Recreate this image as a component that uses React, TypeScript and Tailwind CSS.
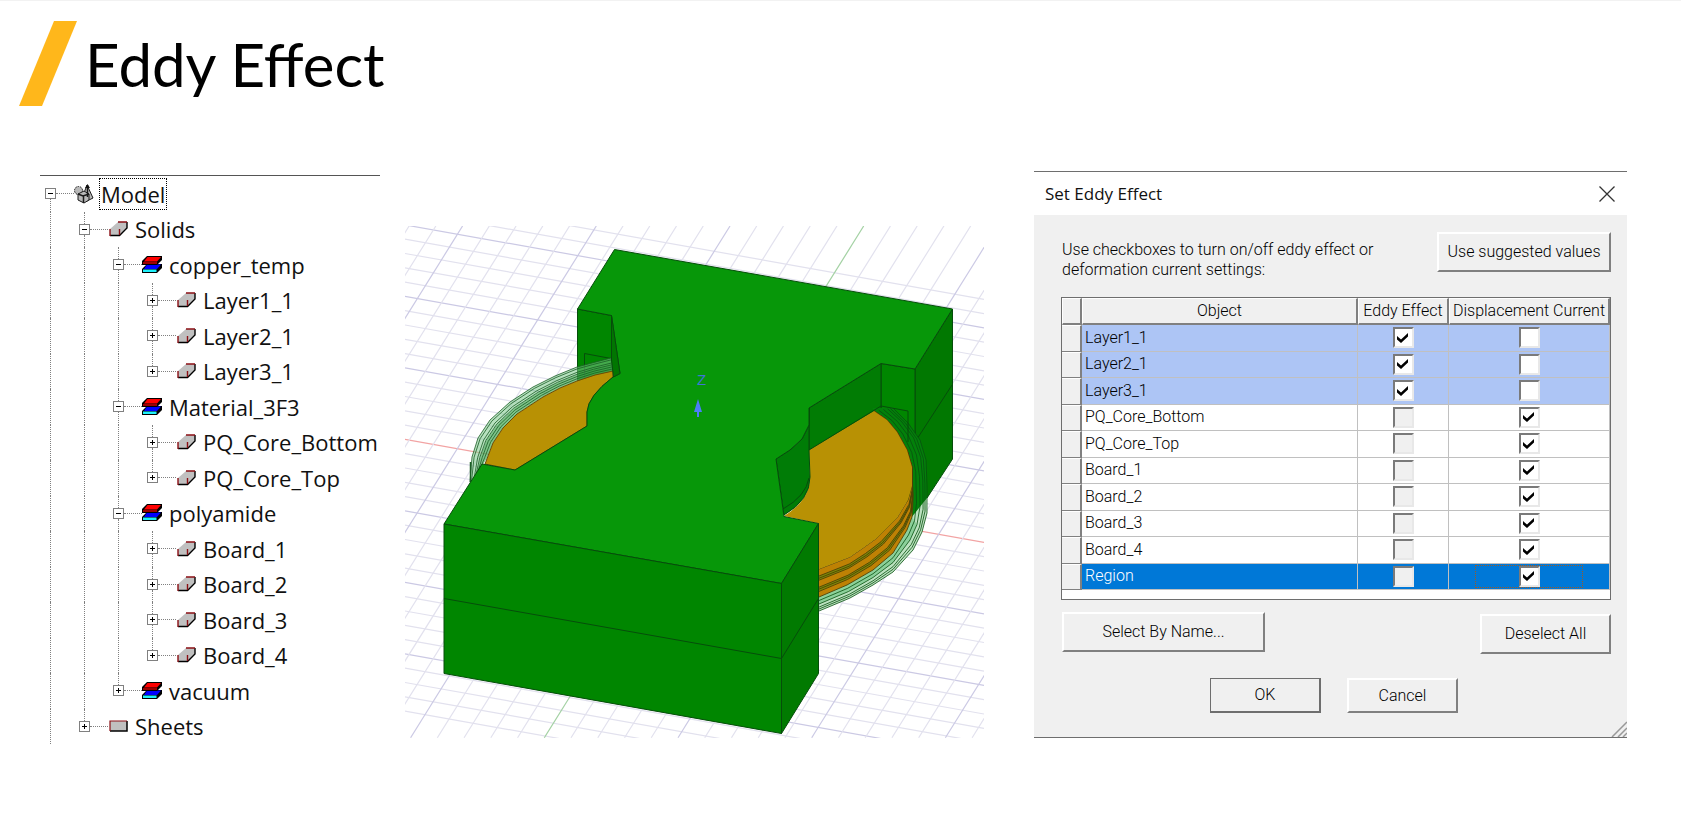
import { useState } from 'react';

type NodeIcon = 'model' | 'solid' | 'material' | 'sheet';

interface TreeRow {
  label: string;
  icon: NodeIcon;
  open?: boolean;
  // one flag for each ancestor column: does its guide line run on past this row
  guides: boolean[];
  top?: boolean;
  bottom?: boolean;
}

const treeRows: TreeRow[] = [
  { label: 'Model', icon: 'model', open: true, guides: [], bottom: true },
  { label: 'Solids', icon: 'solid', open: true, guides: [true], top: true, bottom: true },
  { label: 'copper_temp', icon: 'material', open: true, guides: [true, true], top: true, bottom: true },
  { label: 'Layer1_1', icon: 'solid', guides: [true, true, true], top: true, bottom: true },
  { label: 'Layer2_1', icon: 'solid', guides: [true, true, true], top: true, bottom: true },
  { label: 'Layer3_1', icon: 'solid', guides: [true, true, true], top: true },
  { label: 'Material_3F3', icon: 'material', open: true, guides: [true, true], top: true, bottom: true },
  { label: 'PQ_Core_Bottom', icon: 'solid', guides: [true, true, true], top: true, bottom: true },
  { label: 'PQ_Core_Top', icon: 'solid', guides: [true, true, true], top: true },
  { label: 'polyamide', icon: 'material', open: true, guides: [true, true], top: true, bottom: true },
  { label: 'Board_1', icon: 'solid', guides: [true, true, true], top: true, bottom: true },
  { label: 'Board_2', icon: 'solid', guides: [true, true, true], top: true, bottom: true },
  { label: 'Board_3', icon: 'solid', guides: [true, true, true], top: true, bottom: true },
  { label: 'Board_4', icon: 'solid', guides: [true, true, true], top: true },
  { label: 'vacuum', icon: 'material', guides: [true, true], top: true },
  { label: 'Sheets', icon: 'sheet', guides: [true], top: true },
];

function TreeIcon({ icon }: { icon: NodeIcon }) {
  if (icon === 'model') {
    return (
      <svg width="20" height="20" viewBox="0 0 20 20">
        <g stroke="#1a1a1a" strokeWidth="1" fill="#b8b8b8">
          <circle cx="4.5" cy="6.5" r="4" strokeDasharray="1.5 1" />
          <path d="M13 1l-3 8 3 8 6-3z" />
          <path d="M4 10l6-3 5 3v6l-5 3-6-3z" />
          <path d="M4 10l5 2 6-2M9.5 12v7" fill="none" strokeWidth="1.5" />
          <path d="M13.5 1v12" fill="none" strokeWidth="1.5" />
          <path d="M11 4l2.5-4L16 4z" fill="#111" stroke="none" />
        </g>
      </svg>
    );
  }
  if (icon === 'solid') {
    return (
      <svg width="20" height="16" viewBox="0 0 20 16">
        <path d="M10 1h9v6l-7 8H2V8z" fill="#c0c0c0" />
        <path d="M19 1v6l-7.500 7.500H2" fill="none" stroke="#000" strokeWidth="1.400" />
        <path d="M10 1h9M2 8v7M11.500 8V14" fill="none" stroke="#8b0f14" strokeWidth="1.400" />
      </svg>
    );
  }
  if (icon === 'material') {
    return (
      <svg width="20" height="18" viewBox="0 0 20 18">
        <path d="M5 8h15v4l-5 5H0v-4z" fill="#000" />
        <path d="M5 8.500h14l-4 4.500H2z" fill="#00f" />
        <path d="M1 13.500h13.500v2.500H1z" fill="#1ef0fa" />
        <path d="M5 0h15v4l-5 5H0V5z" fill="#000" />
        <path d="M5.500 1h13.500l-4 4.500H2z" fill="#f00" />
        <path d="M1 6h14v2H1z" fill="#9c0000" />
      </svg>
    );
  }
  return (
    <svg width="20" height="12" viewBox="0 0 20 12">
      <path d="M2 1h17v10H2z" fill="#c0c0c0" />
      <path d="M19 1v10H2" fill="none" stroke="#000" strokeWidth="1.500" />
      <path d="M2 11V1h17" fill="none" stroke="#8b0f14" strokeWidth="1.200" />
    </svg>
  );
}

function ModelTree() {
  return (
    <div className="mt-1 border-t border-[#555] font-['Open_Sans','Noto_Sans',sans-serif] text-[22px] leading-[30px] text-[#111]">
      <ul className="grid h-[568px] auto-rows-fr">
        {treeRows.map((row) => (
          <li key={row.label} className="flex items-stretch">
            {row.guides.map((on, i) => (
              <div key={i} className="flex w-[34px] shrink-0 pl-[10px]">
                {on && <div className="border-l border-dotted border-[#808080]" />}
              </div>
            ))}
            <div className="flex w-[34px] shrink-0 items-stretch pl-[5px]">
              <div className="flex w-[11px] flex-col items-center">
                <div className={`flex-1 border-l border-dotted ${row.top ? 'border-[#808080]' : 'border-transparent'}`} />
                <button
                  aria-label={`${row.open ? 'Collapse' : 'Expand'} ${row.label}`}
                  className="flex size-[11px] shrink-0 items-center justify-center border border-[#808080] bg-white"
                >
                  <svg width="7" height="7" viewBox="0 0 7 7" stroke="#000" strokeWidth="1">
                    <path d={row.open ? 'M1 3.500h5' : 'M1 3.500h5M3.500 1v5'} />
                  </svg>
                </button>
                <div className={`flex-1 border-l border-dotted ${row.bottom ? 'border-[#808080]' : 'border-transparent'}`} />
              </div>
              <div className="flex-1 self-center border-t border-dotted border-[#808080]" />
            </div>
            <div className="flex items-center gap-[5px]">
              <TreeIcon icon={row.icon} />
              <span
                className={`border border-dotted px-px whitespace-nowrap ${
                  row.icon === 'model' ? 'border-black' : 'border-transparent'
                }`}
              >
                {row.label}
              </span>
            </div>
          </li>
        ))}
      </ul>
    </div>
  );
}

type Point = [number, number];

const pts = (list: Point[]) => list.map((p) => p.join(',')).join(' ');

const between = (a: Point[], b: Point[], t: number): Point[] =>
  a.map(([x, y], i) => [x + (b[i][0] - x) * t, y + (b[i][1] - y) * t]);

// left winding, rim and copper edge
const leftOuter: Point[] = [
  [611, 358], [592, 363], [577, 367], [555, 376], [533, 387], [510, 402], [490, 420], [478, 438], [472, 457], [470, 482],
];
const leftInner: Point[] = [
  [613, 371], [595, 375], [577, 381], [560, 388], [543, 397], [517, 414], [503, 428], [493, 443], [487, 458], [482, 466],
];

// right winding, going clockwise from the notch down to the front block
const rightOuter: Point[] = [
  [893, 408], [908, 423], [920, 440], [926, 460], [927, 486], [927, 513], [922, 532], [913, 550], [893, 572], [873, 585], [850, 598], [819, 611],
];
const rightCopper: Point[] = [
  [874, 411], [887, 420], [897, 432], [907, 450], [912, 467], [912, 486], [908, 500], [897, 518], [877, 538], [863, 548], [850, 557], [819, 569],
];
const rightCopperBase: Point[] = [
  [874, 411], [887, 420], [897, 432], [907, 450], [912, 467], [913, 500], [912, 517], [907, 530], [893, 553], [873, 570], [847, 585], [819, 597],
];

function gridLines() {
  const lines = [];
  for (let i = -12; i <= 24; i++) {
    const y = 439.4 + (i - 5) * 14.3;
    lines.push({ key: `h${i}`, x1: 405, y1: y, x2: 984, y2: y + 103, major: (i - 5) % 5 === 0, axis: i === 5 ? '#f2a3a3' : '' });
  }
  for (let i = -18; i <= 18; i++) {
    const x = 863.7 + i * 26.74;
    lines.push({ key: `v${i}`, x1: x, y1: 226, x2: x - 319.4, y2: 737.7, major: i % 5 === 0, axis: i === 0 ? '#a3d1a3' : '' });
  }
  return lines;
}

function ModelView() {
  return (
    <svg viewBox="405 226 579 512" className="mt-[55px] block h-auto w-full" role="img" aria-label="Planar transformer model">
      {gridLines().map((l) => (
        <line key={l.key} x1={l.x1} y1={l.y1} x2={l.x2} y2={l.y2} stroke={l.axis || (l.major ? '#cbc9e4' : '#e2e1ee')} strokeWidth="1.2" />
      ))}

      <g stroke="#064d0b" strokeWidth="1" strokeLinejoin="round">
        {/* back block walls */}
        <polygon points="952.500,309 915,369 915,500 927,498 952.500,459" fill="#017801" />
        <path d="M952 385L917 439" fill="none" />
        <polygon points="881,363.500 915,369 915,520 881,440" fill="#008600" />
        <polygon points="809,408 881,363.500 881,420 809,450" fill="#017c04" />
        <polygon points="577.500,309 611.500,315.500 613,371 577.500,381" fill="#008600" />
        <path d="M584.500 379V353.500L611 358.500" fill="none" />
      </g>

      {/* left winding */}
      <polygon points={pts([...leftOuter, ...[...leftInner].reverse()])} fill="#7cc98a" fillOpacity="0.55" />
      <polygon points={pts([...between(leftOuter, leftInner, 0.55), ...[...leftInner].reverse()])} fill="#2d9c3b" fillOpacity="0.4" />
      {[0, 0.14, 0.38, 0.52, 0.68, 0.84].map((t) => (
        <polyline key={t} points={pts(between(leftOuter, leftInner, t))} fill="none" stroke="#1b5d24" strokeWidth="0.8" />
      ))}
      <path d="M470.500 462v20" stroke="#1b5d24" strokeWidth="1.5" />
      <path
        d="M613 371L595 375 577 381 560 388 543 397 517 414 503 428 493 443 485 464 515 470 587 426V412Q588 396 613 377z"
        fill="#b89104"
        stroke="#6b4c08"
        strokeWidth="1"
      />

      {/* right winding */}
      <path d="M872 408L893 408 908 423 920 440 926 460 927 500 911 522 912 467 897 432z" fill="#03800a" />
      <path d="M911 518L927 498V513L922 532 913 550 893 572 873 585 850 598 819 611V590L893 553z" fill="#bce2c0" />
      <polygon points={pts([...between(rightCopperBase, rightOuter, 0.5).slice(6), ...rightCopperBase.slice(6).reverse()])} fill="#8bd09a" />
      <polygon points={pts([...rightCopper, ...[...rightCopperBase].reverse()])} fill="#be8104" />
      {[0.25, 0.65].map((t) => (
        <polygon
          key={t}
          points={pts([
            ...between(rightCopper, rightCopperBase, t).slice(5),
            ...between(rightCopper, rightCopperBase, t + 0.14).slice(5).reverse(),
          ])}
          fill="#7d8a08"
        />
      ))}
      {[0, 0.25, 0.33, 0.4, 0.65, 0.72, 0.8, 1].map((t) => (
        <polyline key={t} points={pts(between(rightCopper, rightCopperBase, t))} fill="none" stroke="#4d4206" strokeWidth="0.9" />
      ))}
      {[0.25, 0.5, 0.72, 0.86, 1].map((t) => (
        <polyline key={t} points={pts(between(rightCopperBase, rightOuter, t))} fill="none" stroke="#07500f" strokeWidth="0.8" />
      ))}
      <path
        d="M874 411L887 420 897 432 907 450 912 467 912 486 908 500 897 518 877 538 863 548 850 557 819 569V523.500L784 516Q810 500 810 477L809 450z"
        fill="#b89104"
      />
      <path d="M881 406L908 411V442M881 406L809 450" fill="none" stroke="#064d0b" />

      <g stroke="#064d0b" strokeWidth="1" strokeLinejoin="round">
        <path d="M809 408V425L802 439 790 450 776 459 784 515Q810 500 810 477L809 450z" fill="#007c06" />
        <path d="M783 509Q806 496 809 478" fill="none" />
        <path
          d="M614.500 249.500L952.500 309 915 369 881 363.500 809 408V425L802 439 790 450 776 459 784 516.500 818.500 523.500 781.500 583.500 444 524 482 464 515 470 587 426V412Q588 396 613 377L620 373.500 611.500 315.500 577.500 309z"
          fill="#079709"
        />
        <polygon points="611.500,315.500 620,373.500 613.500,377 611.500,360" fill="#017601" />
        {/* front block */}
        <polygon points="444,524 781.500,583.500 781.500,733.500 444,673.500" fill="#008600" />
        <polygon points="781.500,583.500 818.500,523.500 818.500,673.500 781.500,733.500" fill="#017a01" />
        <path d="M444 598.500L781.500 658.500 818.500 598.500" fill="none" />
      </g>

      <text x="697" y="385" fontSize="15" fill="#3e74d8" className="font-['Liberation_Sans',Arial,sans-serif]">
        Z
      </text>
      <path d="M698 399L702 412H699V417H697V412H694z" fill="#4c7cf8" />
    </svg>
  );
}

interface ObjectRow {
  name: string;
  eddy: boolean;
  eddyOff?: boolean;
  displacement: boolean;
  state?: 'marked' | 'active';
}

const initialRows: ObjectRow[] = [
  { name: 'Layer1_1', eddy: true, displacement: false, state: 'marked' },
  { name: 'Layer2_1', eddy: true, displacement: false, state: 'marked' },
  { name: 'Layer3_1', eddy: true, displacement: false, state: 'marked' },
  { name: 'PQ_Core_Bottom', eddy: false, eddyOff: true, displacement: true },
  { name: 'PQ_Core_Top', eddy: false, eddyOff: true, displacement: true },
  { name: 'Board_1', eddy: false, eddyOff: true, displacement: true },
  { name: 'Board_2', eddy: false, eddyOff: true, displacement: true },
  { name: 'Board_3', eddy: false, eddyOff: true, displacement: true },
  { name: 'Board_4', eddy: false, eddyOff: true, displacement: true },
  { name: 'Region', eddy: false, eddyOff: true, displacement: true, state: 'active' },
];

function Check({ label, checked, disabled, onChange }: { label: string; checked: boolean; disabled?: boolean; onChange: () => void }) {
  return (
    <span className="grid size-[21px] place-items-center">
      <input
        type="checkbox"
        aria-label={label}
        checked={checked}
        disabled={disabled}
        onChange={onChange}
        className="col-start-1 row-start-1 size-[21px] appearance-none border-2 border-t-[#7a7a7a] border-r-[#e8e8e8] border-b-[#e8e8e8] border-l-[#7a7a7a] bg-white disabled:bg-[#f0f0f0]"
      />
      {checked && (
        <svg width="12" height="12" viewBox="0 0 12 12" className="pointer-events-none col-start-1 row-start-1">
          <path d="M0 4l4 3.500L11 1v3.500L4 11 0 7.500z" fill="#000" />
        </svg>
      )}
    </span>
  );
}

const buttonClass =
  'border-2 border-t-white border-l-white border-r-[#808080] border-b-[#808080] bg-[#f0f0f0] text-center whitespace-nowrap';

const headClass =
  'border-r-2 border-b-2 border-t border-l border-t-white border-l-white border-r-[#808080] border-b-[#808080] bg-[#f0f0f0] p-0 font-light whitespace-nowrap';

function EddyDialog() {
  const [rows, setRows] = useState(initialRows);

  const toggle = (name: string, field: 'eddy' | 'displacement') => {
    setRows(rows.map((r) => (r.name === name ? { ...r, [field]: !r[field] } : r)));
  };

  return (
    <section className="ml-[25px] border-y border-[#6e6e6e] bg-[#f0f0f0] font-['Roboto','Liberation_Sans',sans-serif] text-base leading-5 font-light text-black">
      <header className="flex h-[43px] items-center justify-between bg-white pr-3 pl-[11px]">
        <h2 className="font-['Open_Sans','Noto_Sans',sans-serif] text-[17px] leading-6 font-normal text-[#111]">Set Eddy Effect</h2>
        <button aria-label="Close" className="flex size-4 items-center justify-center">
          <svg width="16" height="16" viewBox="0 0 16 16" stroke="#333" strokeWidth="1.3">
            <path d="M.5.5l15 15M15.500.5l-15 15" />
          </svg>
        </button>
      </header>

      <div className="pt-[17px] pr-4 pl-[27px]">
        <div className="flex items-start justify-between">
          <p className="pt-[8px] pl-px">
            Use checkboxes to turn on/off eddy effect or
            <br />
            deformation current settings:
          </p>
          <button className={`${buttonClass} h-10 w-[174px]`}>Use suggested values</button>
        </div>

        <div className="mt-[17px] border border-[#6e6e6e] bg-white pb-[9px]">
          <table className="h-[292px] w-full table-fixed border-separate border-spacing-0">
            <colgroup>
              <col className="w-5" />
              <col />
              <col className="w-[91px]" />
              <col className="w-[161px]" />
            </colgroup>
            <thead>
              <tr className="h-[27px]">
                <th className={headClass} aria-label="Row" />
                <th className={headClass}>Object</th>
                <th className={headClass}>Eddy Effect</th>
                <th className={headClass}>Displacement Current</th>
              </tr>
            </thead>
            <tbody>
              {rows.map((row) => (
                <tr
                  key={row.name}
                  className={
                    row.state === 'active' ? 'bg-[#0078d7] text-white' : row.state === 'marked' ? 'bg-[#adc5f5]' : 'bg-white'
                  }
                >
                  <td className="border-t border-r-2 border-b border-t-white border-r-[#808080] border-b-[#808080] bg-[#f0f0f0] p-0" />
                  <td className="border-r border-b border-[#c0c0c0] p-0 pl-[3px]">{row.name}</td>
                  <td className="border-r border-b border-[#c0c0c0] p-0">
                    <div className="flex justify-center">
                      <Check
                        label={`${row.name} eddy effect`}
                        checked={row.eddy}
                        disabled={row.eddyOff}
                        onChange={() => toggle(row.name, 'eddy')}
                      />
                    </div>
                  </td>
                  <td className="border-r border-b border-[#c0c0c0] p-0">
                    <div
                      className={`mx-auto flex w-[106px] justify-center ${
                        row.state === 'active' ? 'outline outline-dotted outline-[#a05a20]' : ''
                      }`}
                    >
                      <Check
                        label={`${row.name} displacement current`}
                        checked={row.displacement}
                        onChange={() => toggle(row.name, 'displacement')}
                      />
                    </div>
                  </td>
                </tr>
              ))}
            </tbody>
          </table>
        </div>

        <div className="mt-3 flex items-start justify-between pl-[1px]">
          <button className={`${buttonClass} h-10 w-[203px]`}>Select By Name...</button>
          <button className={`${buttonClass} mt-[2px] h-10 w-[131px]`}>Deselect All</button>
        </div>
      </div>

      <div className="mt-6 flex justify-center gap-[26px] pl-[7px]">
        <button className="h-[35px] w-[111px] border border-r-2 border-b-2 border-[#6e6e6e] bg-[#f0f0f0]">OK</button>
        <button className={`${buttonClass} h-[35px] w-[111px]`}>Cancel</button>
      </div>
      <div className="mt-2 flex justify-end">
        <svg width="16" height="16" viewBox="0 0 16 16" stroke="#999" strokeWidth="1.5">
          <path d="M1 16L16 1M7 16l9-9M12 16l4-4" />
        </svg>
      </div>
    </section>
  );
}

export default function App() {
  return (
    <div className="min-h-screen border-t border-[#f2f2f2] bg-white">
      <header className="flex items-center gap-2 pt-5 pl-[19px]">
        <svg width="58" height="85" viewBox="0 0 58 85">
          <path d="M35 0h23L23 85H0z" fill="#ffb71b" />
        </svg>
        <h1 className="font-['Lato','Open_Sans',sans-serif] text-[60px] leading-[72px] text-black">Eddy Effect</h1>
      </header>

      <main className="grid grid-cols-[minmax(0,340fr)_minmax(0,579fr)_minmax(0,618fr)] items-start gap-x-[25px] pt-[65px] pr-[54px] pl-10">
        <ModelTree />
        <ModelView />
        <EddyDialog />
      </main>
    </div>
  );
}
